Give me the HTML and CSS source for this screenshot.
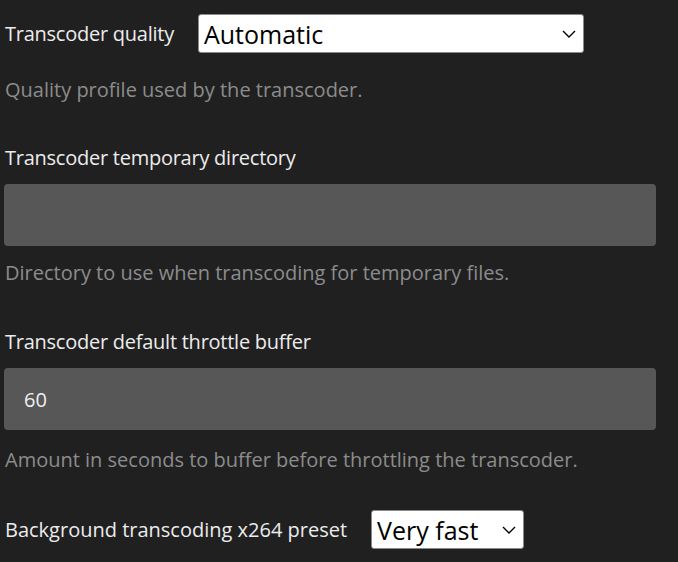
FILE: index.html
```html
<!DOCTYPE html>
<html lang="en">
<head>
<meta charset="utf-8">
<title>Transcoding settings</title>
<link rel="stylesheet" href="styles.css">
</head>
<body>
<div class="page">
  <div class="field">
    <div class="inline-row">
      <label class="label" for="quality">Transcoder quality</label>
      <div class="select-wrap select-wide">
        <select id="quality" class="select">
          <option>Automatic</option>
        </select>
        <svg class="chevron" width="14" height="8" viewBox="0 0 14 8"><path d="M1 1 L7 7 L13 1" fill="none" stroke="#000" stroke-width="1.4"/></svg>
      </div>
    </div>
    <div class="desc desc-first">Quality profile used by the transcoder.</div>
  </div>

  <div class="field">
    <label class="label block" for="tempdir">Transcoder temporary directory</label>
    <input id="tempdir" class="text-input" type="text" value="">
    <div class="desc">Directory to use when transcoding for temporary files.</div>
  </div>

  <div class="field field-third">
    <label class="label block" for="throttle">Transcoder default throttle buffer</label>
    <input id="throttle" class="text-input" type="text" value="60">
    <div class="desc desc-loose">Amount in seconds to buffer before throttling the transcoder.</div>
  </div>

  <div class="field field-tight">
    <div class="inline-row">
      <label class="label label-wide" for="preset">Background transcoding x264 preset</label>
      <div class="select-wrap select-narrow">
        <select id="preset" class="select">
          <option>Very fast</option>
        </select>
        <svg class="chevron" width="14" height="8" viewBox="0 0 14 8"><path d="M1 1 L7 7 L13 1" fill="none" stroke="#000" stroke-width="1.4"/></svg>
      </div>
    </div>
  </div>
</div>
</body>
</html>
```
FILE: styles.css
```css
* { box-sizing: border-box; }
html, body {
  margin: 0;
  padding: 0;
  background: #202020;
}
body {
  font-family: "Open Sans", "Noto Sans", sans-serif;
  color: #e8e8e8;
}
.page {
  padding: 14px 22px 0 4px;
}
.field + .field { margin-top: 40px; }
.field + .field-third { margin-top: 41px; }
.field + .field-tight { margin-top: 36px; }
.inline-row {
  display: flex;
  align-items: center;
}
.label {
  font-size: 20px;
  line-height: 28px;
  color: #ececec;
  padding-left: 1px;
  letter-spacing: -0.25px;
}
.label.block { display: block; }
.label-wide { letter-spacing: 0; }
.inline-row .label { margin-right: 24px; }
.select-wrap {
  position: relative;
  height: 39px;
}
.select-wide { width: 386px; }
.select-narrow { width: 153px; }
.select {
  appearance: none;
  -webkit-appearance: none;
  width: 100%;
  height: 100%;
  background: #ffffff;
  border: 1px solid #8a8a8a;
  border-radius: 3px;
  font-family: inherit;
  font-size: 25px;
  color: #000;
  padding: 0 30px 0 5px;
  margin: 0;
  outline: none;
}
.chevron {
  position: absolute;
  right: 8px;
  top: 16px;
  pointer-events: none;
}
.desc {
  font-size: 20px;
  line-height: 28px;
  color: #8c8c8c;
  padding-left: 1px;
  margin-top: 13px;
}
.desc-first { margin-top: 23px; }
.desc-loose { margin-top: 16px; }
.text-input {
  display: block;
  width: 652px;
  height: 62px;
  margin-top: 12px;
  background: #575757;
  border: none;
  border-radius: 4px;
  font-family: inherit;
  font-size: 20px;
  color: #f0f0f0;
  padding: 0 20px;
  outline: none;
}
```
